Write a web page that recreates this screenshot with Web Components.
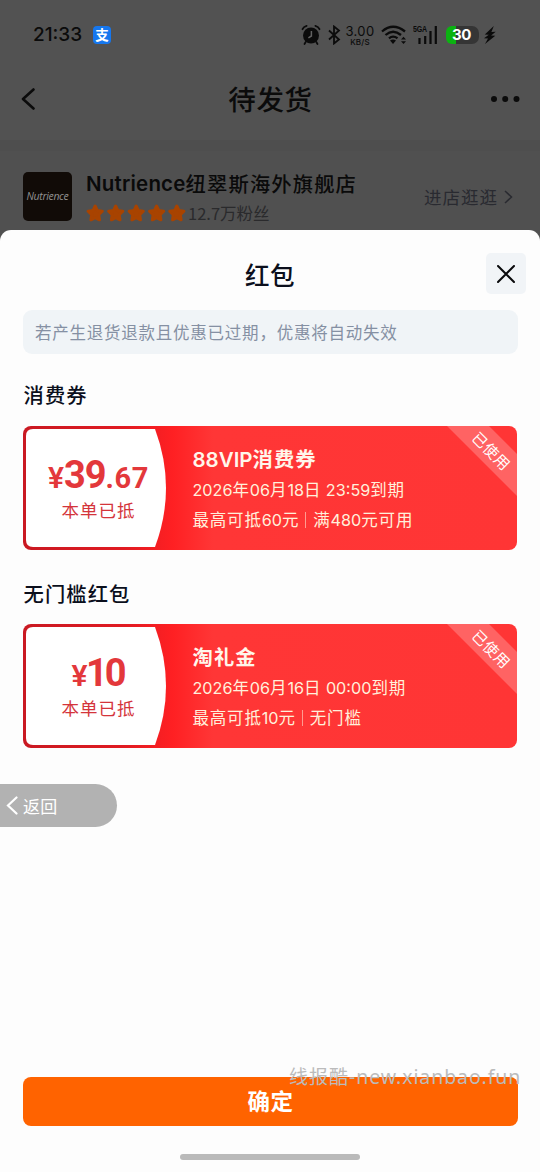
<!DOCTYPE html>
<html lang="zh-CN">
<head>
<meta charset="utf-8">
<meta name="viewport" content="width=device-width">
<title>红包</title>
<style>
html,body{margin:0;padding:0}
body{width:540px;height:1172px;overflow:hidden;background:#525252;font-family:Inter,"Noto Sans CJK SC",sans-serif;color:#0b0f1c}
</style>
</head>
<body>
<order-screen></order-screen>
<script>
function define(name, html) {
  const template = document.createElement('template');
  template.innerHTML = html.trim();
  customElements.define(name, class extends HTMLElement {
    constructor() {
      super();
      this.attachShadow({ mode: 'open' }).appendChild(template.content.cloneNode(true));
    }
  });
}

define('status-bar', `
<style>
:host{display:flex;height:70px;box-sizing:border-box;padding:0 44px 0 33px;align-items:center;color:#0b0b0b}
.time{font:500 19px/24px Inter,sans-serif;letter-spacing:0;width:60px;white-space:nowrap}
.pay{width:18px;height:18px;border-radius:4px;background:#1677ee;color:#fff;font:700 13.500px/17px "Noto Sans CJK SC",sans-serif;text-align:center}
.right{margin-left:auto;display:flex;align-items:center;height:24px}
svg{display:block;flex:none}
.speed{display:flex;flex-direction:column;align-items:center;width:30px;margin:0 6px 0 4px}
.speed b{font:400 13px/14px Inter,sans-serif;letter-spacing:.4px}
.speed i{font:500 8px/8px Inter,sans-serif;letter-spacing:.2px}
.cell{display:grid;margin:0 9px 0 6px}
.cell>*{grid-area:1/1}
.cell span{font:700 9px/9px "Liberation Sans",sans-serif;transform:scaleX(.78);transform-origin:0 0;letter-spacing:-.2px;margin:0;width:20px}
.battery{width:33px;height:18px;border-radius:6px 7px 7px 6px;background:linear-gradient(90deg,#0bb311 10px,#353535 10px);color:#fff;font:700 15px/18px Inter,sans-serif;text-align:center;letter-spacing:-.3px;text-indent:-2px;margin-right:5px}
</style>
<span class="time">21:33</span><span class="pay">支</span>
<div class="right">
<svg width="20" height="22" viewBox="0 0 20 22"><g fill="none" stroke="#0b0b0b" stroke-width="1.8" stroke-linecap="round"><path d="M1.5 5.2Q2.6 2.6 5.6 1.8M18.5 5.2Q17.4 2.6 14.4 1.8M4.7 18l-1.2 2M15.3 18l1.2 2"/></g><circle cx="10" cy="11.5" r="8" fill="#0b0b0b"/><path d="M10.4 7v5l-3 1.8" fill="none" stroke="#626262" stroke-width="1.5"/></svg>
<svg style="margin-left:7px" width="13" height="20" viewBox="0 0 13 20"><path d="M1 5.5l10 9-5 4v-17l5 4-10 9" fill="none" stroke="#0b0b0b" stroke-width="1.8"/></svg>
<div class="speed"><b>3.00</b><i>KB/S</i></div>
<svg width="26" height="20" viewBox="0 0 26 20"><g fill="none" stroke="#0b0b0b" stroke-width="2.3"><path d="M1 6.5Q12 -3 24 6.5M4.5 10Q12 3.5 20 10M8 13.3Q12 10 16.5 13.3"/></g><path d="M9 15.5Q12 13.5 15 15.5L12 19Z" fill="#0b0b0b"/><path d="M20 14.5l2.5-2.7 2.5 2.7zM20 16.2h5l-2.5 2.7z" fill="#0b0b0b"/></svg>
<div class="cell"><svg width="24" height="20" viewBox="0 0 24 20"><path d="M6.5 19v-6M12.2 19v-8M17.5 19V6M22.8 19V1" stroke="#0b0b0b" stroke-width="2.2"/></svg><span>5GA</span></div>
<div class="battery">30</div>
<svg width="12" height="18" viewBox="0 0 12 18"><path d="M9.8 0L.8 8.4l4 .4L0 12.2l4 .2L1 18 11.3 9.8l-4.2-.3 4.6-3.7-4.3.2z" fill="#0b0b0b"/></svg>
</div>`);

define('nav-bar', `
<style>
:host{display:flex;height:70px;box-sizing:border-box;padding:0 20px 12px 21px;align-items:center;justify-content:space-between;color:#0b0b0b}
h1{margin:-2px 0 0;font:500 27.5px/40px "Noto Sans CJK SC",sans-serif;letter-spacing:.6px}
svg{display:block}
</style>
<svg width="30" height="22" viewBox="0 0 30 22"><path d="M12.5 1.5L2 11l10.500 9.500" fill="none" stroke="#0b0b0b" stroke-width="2.6" stroke-linecap="round" stroke-linejoin="round"/></svg>
<h1><slot></slot></h1>
<svg width="30" height="8" viewBox="0 0 30 8"><g fill="#0b0b0b"><circle cx="4" cy="4" r="3"/><circle cx="15.200" cy="4" r="3"/><circle cx="26.500" cy="4" r="3"/></g></svg>`);

define('rating-stars', `
<style>:host{display:block}svg{display:block}</style>
<svg width="102" height="20" viewBox="0 0 102 20"><defs><path id="s" d="M9.200 3l2.100 4.500 5 .7-3.600 3.600.8 5-4.300-2.200-4.300 2.200.8-5-3.600-3.600 5-.7z" stroke-linejoin="round" stroke-width="3"/></defs><g fill="#a84300" stroke="#a84300"><use href="#s"/><use href="#s" x="20.500"/><use href="#s" x="41"/><use href="#s" x="61.400"/><use href="#s" x="81.600"/></g></svg>`);

define('shop-header', `
<style>
:host{display:flex;height:99px;box-sizing:border-box;padding:21px 26px 0 23px;background:#505050;border-top:11px solid #4e4e4e}
.logo{width:49px;height:49px;border-radius:5px;background:#110b07;color:#929292;font:italic 500 10.500px/49px "Open Sans",sans-serif;text-align:center;letter-spacing:-.35px;flex:none}
.info{margin-left:14px;white-space:nowrap}
h2{margin:0;font:500 20px/24px Inter,"Noto Sans CJK SC",sans-serif;color:#0a0a0a;display:flex;align-items:center}
h2 .zh{font-family:"Noto Sans CJK SC";font-size:20.300px;letter-spacing:1.150px;margin-top:-2px}
h2 .en{font-weight:600;font-size:20.500px;letter-spacing:.2px}
.meta{display:flex;align-items:center;margin-top:7px;height:20px;color:#2a2a2c;font:400 16.500px/20px "Noto Sans CJK SC",sans-serif}
.enter{margin-left:auto;display:flex;align-items:center;height:50px;color:#292a30;font:400 17.500px/24px "Noto Sans CJK SC",sans-serif;letter-spacing:1px}
.enter svg{margin-left:6px;margin-right:1px}
</style>
<div class="logo">Nutrience</div>
<div class="info"><h2><span class="en">Nutrience</span><span class="zh">纽翠斯海外旗舰店</span></h2>
<div class="meta"><rating-stars></rating-stars><span>12.7万粉丝</span></div></div>
<div class="enter">进店逛逛<svg width="9" height="14" viewBox="0 0 9 14"><path d="M1 1l6.500 6L1 13" fill="none" stroke="#292a30" stroke-width="1.500"/></svg></div>`);

define('sheet-header', `
<style>
:host{display:grid;grid-template-columns:40px 1fr 40px;height:80px;padding:0 14px;align-items:center}
h2{margin:9px 0 0;text-align:center;font:500 24.500px/34px "Noto Sans CJK SC",sans-serif;letter-spacing:.6px;grid-column:2}
button{border:0;padding:0;width:40px;height:41px;margin-top:7px;border-radius:5px;background:#f1f4f7;display:grid;place-items:center}
</style>
<h2><slot></slot></h2>
<button aria-label="关闭"><svg width="18" height="18" viewBox="0 0 18 18"><path d="M1 1l16 16M17 1L1 17" stroke="#0a0a0c" stroke-width="2" stroke-linecap="round"/></svg></button>`);

define('notice-bar', `
<style>
:host{display:flex;align-items:center;height:44px;margin:0 22px 0 23px;box-sizing:border-box;padding:0 12px;border-radius:9px;background:#f0f4f7;color:#8590a3;font:400 16.500px/24px "Noto Sans CJK SC",sans-serif;letter-spacing:.760px;white-space:nowrap}
</style><slot></slot>`);

define('coupon-section', `
<style>
:host{display:block;margin:0 23px}
h3{margin:0;font:500 20.300px/30px "Noto Sans CJK SC",sans-serif;letter-spacing:1.100px;padding:0 0 var(--title-gap,17px) .6px}
</style><h3><slot name="title"></slot></h3><slot></slot>`);

define('coupon-card', `
<style>
:host{display:grid;grid-template-columns:145px 1fr;width:494px;height:124px;border-radius:8px;overflow:hidden;position:relative;background:linear-gradient(90deg,#c91922 0,#e01b22 100px,#ff2023 150px,#ff3636 190px,#ff3535)}
.shape,.ribbon{position:absolute;inset:0}
.ribbon text{font:400 15px "Noto Sans CJK SC",sans-serif;fill:#fff}
.amount{position:relative;padding:28px 0 0 6px;text-align:center;color:#e3383b}
.price{height:43px;display:flex;justify-content:center;align-items:baseline;font:700 38px/43px Roboto,sans-serif;white-space:nowrap}
.used{font:400 17.500px/26px "Noto Sans CJK SC",sans-serif;letter-spacing:1px;color:#d4343b}
.info{position:relative;padding:20px 0 0 24.500px;color:#fff0dc;white-space:nowrap;font:400 16.200px/30px Inter,"Noto Sans CJK SC",sans-serif}
.info div{display:flex;align-items:center;height:30px}
.info .name{font-size:20.500px;font-weight:600;color:#fff6eb;line-height:28px;height:28px;margin-bottom:1px}
</style>
<svg class="shape" width="494" height="124"><path d="M10 3H132Q154 62 132 121H10Q3 121 3 114V10Q3 3 10 3Z" fill="#fff"/></svg>
<div class="amount"><div class="price"><slot name="price"></slot></div><div class="used">本单已抵</div></div>
<div class="info"><div class="name"><slot name="name"></slot></div><div><slot name="date"></slot></div><div><slot name="rule"></slot></div></div>
<svg class="ribbon" width="494" height="124"><path d="M424 0H466L494 28V70Z" fill="#ff6363"/><text transform="translate(468 25) rotate(45)" text-anchor="middle" y="5.500" textLength="46">已使用</text></svg>`);

define('zh-text', `
<style>:host{display:inline;line-height:1;font-family:"Noto Sans CJK SC",sans-serif;font-size:16.500px;letter-spacing:.800px}
:host([bold]){font-size:20.300px;letter-spacing:1.100px;font-weight:700}</style><slot></slot>`);

define('rule-divider', `<style>:host{display:block;width:1px;height:16px;margin:0 7px 0 6px;background:#ff9b90}</style>`);

define('money-value', `
<style>:host{display:flex;align-items:baseline}
.yen{font-size:30px;font-weight:600;letter-spacing:0}
.main{font-size:38px;letter-spacing:-1px}
.cents{font-size:29px;letter-spacing:.6px}
:host([narrow]) .main{letter-spacing:-3px;margin-left:-1.500px}
:host([narrow]) .cents{width:2px}</style>
<span class="yen">¥</span><span class="main"><slot></slot></span><span class="cents"><slot name="cents"></slot></span>`);

define('primary-button', `
<style>:host{display:block;height:49px;margin:0 22px 0 23px}
button{display:block;width:100%;height:100%;border:0;border-radius:8px;background:#ff6300;color:#fff;font:700 22.500px/44px "Noto Sans CJK SC",sans-serif;letter-spacing:.5px;padding:0 0 4px}</style>
<button><slot></slot></button>`);

define('back-pill', `
<style>:host{position:absolute;left:0;top:554px;display:flex;align-items:center;box-sizing:border-box;width:117px;height:43px;padding-left:6px;border-radius:0 22px 22px 0;background:#b2b2b2;color:#fff;font:400 17px/24px "Noto Sans CJK SC",sans-serif;letter-spacing:.3px}
svg{margin-right:5px}</style>
<svg width="12" height="19" viewBox="0 0 12 19"><path d="M10.500 1.500L2 9.500l8.500 8" fill="none" stroke="#fff" stroke-width="2.200" stroke-linecap="round"/></svg><slot></slot>`);

define('site-mark', `
<style>:host{position:absolute;left:289px;top:834px;font:400 19.500px/26px "Noto Sans","Noto Sans CJK SC",sans-serif;letter-spacing:.9px;color:#bbb;white-space:nowrap}
.zh{font-size:19px;letter-spacing:1px}</style><span class="zh"><slot name="zh"></slot></span><slot></slot>`);

define('bottom-sheet', `
<style>
:host{display:flex;flex-direction:column;position:relative;height:942px;margin-top:-9px;background:#fdfdfd;border-radius:11px 11px 0 0}
.footer{margin-top:auto;height:95px}
.home{width:180px;height:6px;border-radius:3px;background:#bababa;margin:28px auto 0}
</style>
<slot></slot>
<div class="footer"><slot name="action"></slot><div class="home"></div></div>
<slot name="overlay"></slot>`);

define('order-screen', `
<style>
:host{display:block;width:540px;height:1172px;overflow:hidden}
.first{margin-top:25px}
.second{margin-top:28px;--title-gap:16px}
</style>
<status-bar></status-bar>
<nav-bar>待发货</nav-bar>
<shop-header></shop-header>
<bottom-sheet>
<sheet-header>红包</sheet-header>
<notice-bar>若产生退货退款且优惠已过期，优惠将自动失效</notice-bar>
<coupon-section class="first"><span slot="title">消费券</span>
<coupon-card><money-value slot="price">39<span slot="cents">.67</span></money-value>
<span slot="name">88VIP<zh-text bold>消费券</zh-text></span>
<span slot="date">2026<zh-text>年</zh-text>06<zh-text>月</zh-text>18<zh-text>日</zh-text> 23:59<zh-text>到期</zh-text></span>
<span slot="rule"><zh-text>最高可抵</zh-text>60<zh-text>元</zh-text></span><rule-divider slot="rule"></rule-divider><span slot="rule"><zh-text>满</zh-text>480<zh-text>元可用</zh-text></span>
</coupon-card></coupon-section>
<coupon-section class="second"><span slot="title">无门槛红包</span>
<coupon-card><money-value slot="price" narrow>10</money-value>
<span slot="name"><zh-text bold>淘礼金</zh-text></span>
<span slot="date">2026<zh-text>年</zh-text>06<zh-text>月</zh-text>16<zh-text>日</zh-text> 00:00<zh-text>到期</zh-text></span>
<span slot="rule"><zh-text>最高可抵</zh-text>10<zh-text>元</zh-text></span><rule-divider slot="rule"></rule-divider><span slot="rule"><zh-text>无门槛</zh-text></span>
</coupon-card></coupon-section>
<primary-button slot="action">确定</primary-button>
<back-pill slot="overlay">返回</back-pill>
<site-mark slot="overlay"><span slot="zh">线报酷</span>-new.xianbao.fun</site-mark>
</bottom-sheet>`);
</script>
</body>
</html>
